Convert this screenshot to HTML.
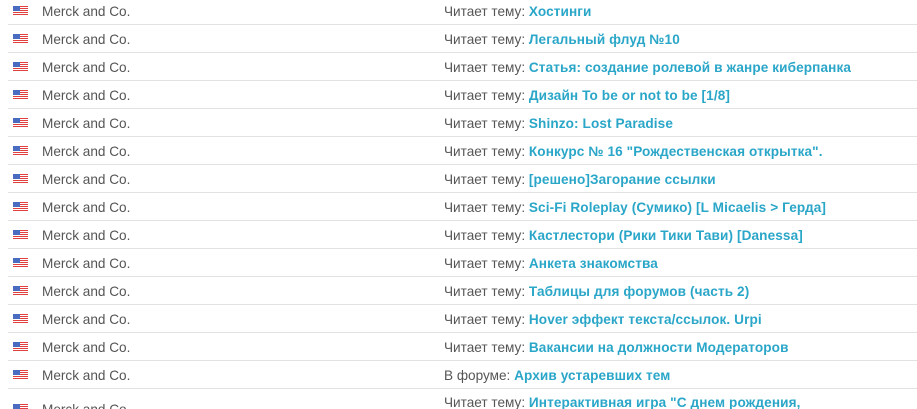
<!DOCTYPE html>
<html><head><meta charset="utf-8"><style>
html,body{margin:0;background:#fff;width:917px;height:409px;overflow:hidden}
body{position:relative;font-family:"Liberation Sans","DejaVu Sans",sans-serif;font-size:13.6px;color:#555}
.r{position:absolute;left:0;width:917px;height:28px}
.b{position:absolute;left:8px;right:0;bottom:0;border-bottom:1px solid #e2e2e2}
.f{position:absolute;left:13px;width:15px;height:9px;background:repeating-linear-gradient(#e04040 0 1px,#fff 1px 2px)}
.f:before{content:"";position:absolute;left:0;top:0;width:7px;height:5px;background:#4a6cc0}
.n{position:absolute;left:42px}
.t{position:absolute;left:444px;white-space:nowrap}
.t a{color:#2aa6c8;font-weight:bold;text-decoration:none;letter-spacing:0.1px}
</style></head><body>
<div class="r" style="top:-3px"><div class="f" style="top:9px"></div><div class="n" style="top:7px">Merck and Co.</div><div class="t" style="top:7px">Читает тему: <a>Хостинги</a></div><div class="b"></div></div>
<div class="r" style="top:25px"><div class="f" style="top:9px"></div><div class="n" style="top:7px">Merck and Co.</div><div class="t" style="top:7px">Читает тему: <a>Легальный флуд №10</a></div><div class="b"></div></div>
<div class="r" style="top:53px"><div class="f" style="top:9px"></div><div class="n" style="top:7px">Merck and Co.</div><div class="t" style="top:7px">Читает тему: <a>Статья: создание ролевой в жанре киберпанка</a></div><div class="b"></div></div>
<div class="r" style="top:81px"><div class="f" style="top:9px"></div><div class="n" style="top:7px">Merck and Co.</div><div class="t" style="top:7px">Читает тему: <a>Дизайн To be or not to be [1/8]</a></div><div class="b"></div></div>
<div class="r" style="top:109px"><div class="f" style="top:9px"></div><div class="n" style="top:7px">Merck and Co.</div><div class="t" style="top:7px">Читает тему: <a>Shinzo: Lost Paradise</a></div><div class="b"></div></div>
<div class="r" style="top:137px"><div class="f" style="top:9px"></div><div class="n" style="top:7px">Merck and Co.</div><div class="t" style="top:7px">Читает тему: <a>Конкурс № 16 "Рождественская открытка".</a></div><div class="b"></div></div>
<div class="r" style="top:165px"><div class="f" style="top:9px"></div><div class="n" style="top:7px">Merck and Co.</div><div class="t" style="top:7px">Читает тему: <a>[решено]Загорание ссылки</a></div><div class="b"></div></div>
<div class="r" style="top:193px"><div class="f" style="top:9px"></div><div class="n" style="top:7px">Merck and Co.</div><div class="t" style="top:7px">Читает тему: <a>Sci-Fi Roleplay (Сумико) [L Micaelis &gt; Герда]</a></div><div class="b"></div></div>
<div class="r" style="top:221px"><div class="f" style="top:9px"></div><div class="n" style="top:7px">Merck and Co.</div><div class="t" style="top:7px">Читает тему: <a>Кастлестори (Рики Тики Тави) [Danessa]</a></div><div class="b"></div></div>
<div class="r" style="top:249px"><div class="f" style="top:9px"></div><div class="n" style="top:7px">Merck and Co.</div><div class="t" style="top:7px">Читает тему: <a>Анкета знакомства</a></div><div class="b"></div></div>
<div class="r" style="top:277px"><div class="f" style="top:9px"></div><div class="n" style="top:7px">Merck and Co.</div><div class="t" style="top:7px">Читает тему: <a>Таблицы для форумов (часть 2)</a></div><div class="b"></div></div>
<div class="r" style="top:305px"><div class="f" style="top:9px"></div><div class="n" style="top:7px">Merck and Co.</div><div class="t" style="top:7px">Читает тему: <a>Hover эффект текста/ссылок. Urpi</a></div><div class="b"></div></div>
<div class="r" style="top:333px"><div class="f" style="top:9px"></div><div class="n" style="top:7px">Merck and Co.</div><div class="t" style="top:7px">Читает тему: <a>Вакансии на должности Модераторов</a></div><div class="b"></div></div>
<div class="r" style="top:361px"><div class="f" style="top:9px"></div><div class="n" style="top:7px">Merck and Co.</div><div class="t" style="top:7px">В форуме: <a>Архив устаревших тем</a></div><div class="b"></div></div>
<div class="r" style="top:389px;height:20px;overflow:hidden"><div class="f" style="top:15px"></div><div class="n" style="top:13px">Merck and Co.</div><div class="t" style="top:6px">Читает тему: <a>Интерактивная игра "С днем рождения,</a></div></div>
</body></html>
